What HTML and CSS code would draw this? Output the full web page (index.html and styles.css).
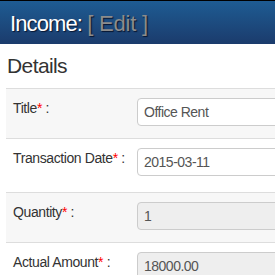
FILE: index.html
```html
<!DOCTYPE html>
<html lang="en">
<head>
    <meta charset="UTF-8">
    <meta name="viewport" content="width=device-width, initial-scale=1.0">
    <title>Income: Edit</title>
    <link rel="stylesheet" href="styles.css">
</head>
<body>
    <div class="topbar">
        <h1 class="page-title">Income: <span class="page-action">[ Edit ]</span></h1>
    </div>

    <div class="content">
        <h2 class="section-title">Details</h2>

        <div class="form-row">
            <label class="form-label">Title<span class="required">*</span> :</label>
            <input class="form-input" type="text" value="Office Rent">
        </div>
        <div class="form-row tall">
            <label class="form-label">Transaction Date<span class="required">*</span> :</label>
            <input class="form-input" type="text" value="2015-03-11">
        </div>
        <div class="form-row">
            <label class="form-label">Quantity<span class="required">*</span> :</label>
            <input class="form-input" type="text" value="1" disabled>
        </div>
        <div class="form-row">
            <label class="form-label">Actual Amount<span class="required">*</span> :</label>
            <input class="form-input" type="text" value="18000.00" disabled>
        </div>
    </div>
</body>
</html>
```

FILE: styles.css
```css
html, body {
    margin: 0;
    height: 100%;
    overflow: hidden;
    background-color: #fff;
    font-family: "Liberation Sans", Arial, sans-serif;
    color: #333;
}

.topbar {
    height: 44px;
    box-sizing: border-box;
    border-top: 1px solid #000;
    background: linear-gradient(to bottom, #1e5c93, #1b3b6c);
    display: flex;
    align-items: center;
    padding: 2px 0 0 10px;
}

.page-title {
    margin: 0;
    font-size: 22px;
    font-weight: normal;
    color: #fff;
    letter-spacing: -0.9px;
    text-shadow: 1px 1px 1px #071530;
}

.page-action {
    color: #8c8c8c;
    letter-spacing: -0.2px;
}

.content {
    width: 420px;
    padding-left: 6px;
}

.section-title {
    margin: 10px 0 10px 1px;
    font-size: 21px;
    line-height: 24px;
    font-weight: normal;
    color: #333;
    letter-spacing: -0.6px;
}

.form-row {
    display: grid;
    grid-template-columns: 124px 1fr;
    align-items: start;
    padding: 9px 0 12px 7px;
    border-top: 1px solid #ddd;
}

.form-row:nth-of-type(odd) {
    background-color: #f7f7f7;
}

.form-row.tall {
    padding-bottom: 16px;
}

.form-label {
    font-size: 14px;
    line-height: 20px;
    letter-spacing: -0.4px;
    color: #333;
}

.required {
    color: #f00;
}

.form-input {
    height: 28px;
    box-sizing: border-box;
    padding: 0 6px;
    border: 1px solid #ccc;
    border-radius: 4px;
    background-color: #fff;
    font-family: "Liberation Sans", Arial, sans-serif;
    font-size: 14px;
    letter-spacing: -0.5px;
    color: #555;
}

.form-input:disabled {
    background-color: #eee;
    color: #555;
}
```
